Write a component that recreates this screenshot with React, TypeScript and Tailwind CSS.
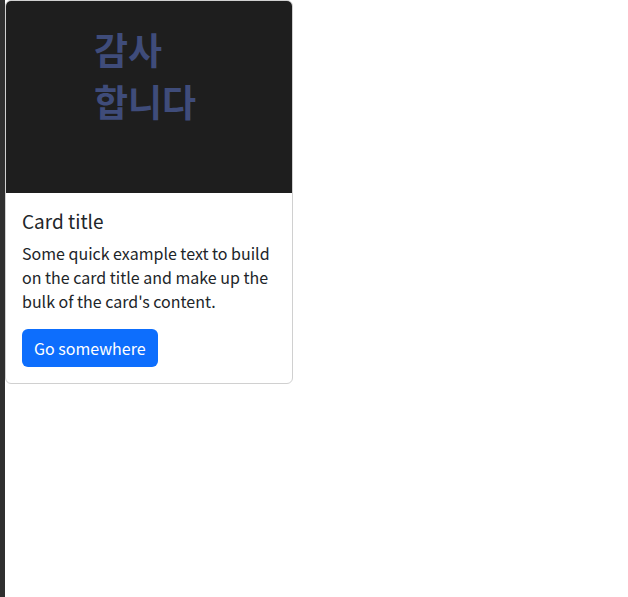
import React from 'react';

const font = { fontFamily: '"Noto Sans CJK KR", "Noto Sans", sans-serif' };

const App = () => {
  return (
    <div className="flex min-h-[597px] bg-white" style={font}>
      {/* left edge strip */}
      <div className="w-[5px] shrink-0 bg-[#2f2f2f]" />

      <div className="w-[288px] self-start overflow-hidden rounded-md border border-[#d0d0d0] bg-white">
        {/* image area */}
        <div className="h-[192px] bg-[#1e1e1e] pl-[88px] pt-[22px]">
          <p className="text-[37px] font-bold leading-[52px] text-[#3f4c7a]">
            감사
            <br />
            합니다
          </p>
        </div>

        {/* body */}
        <div className="p-4">
          <h5 className="mb-2 text-[19px] leading-[24px] text-[#212529]">Card title</h5>
          <p className="mb-4 text-base leading-6 text-[#212529]">
            Some quick example text to build on the card title and make up the bulk of the card's content.
          </p>
          <button className="rounded-md bg-[#0d6efd] px-3 py-[6px] text-base leading-[26px] text-white">
            Go somewhere
          </button>
        </div>
      </div>
    </div>
  );
};

export default App;
